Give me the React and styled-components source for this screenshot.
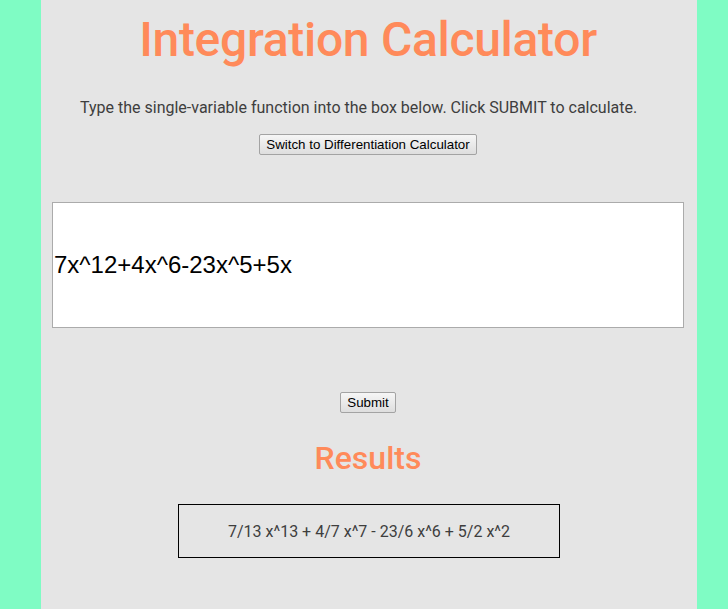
import React from "react";
import styled, { createGlobalStyle } from "styled-components";

const Global = createGlobalStyle`
  html, body { margin: 0; padding: 0; }
  body { background: #7ffcc4; font-family: Roboto, "Liberation Sans", sans-serif; }
`;

const Page = styled.div`
  min-height: 609px;
  display: flex;
`;

const Panel = styled.main`
  flex: 1;
  margin: 0 31px 0 41px;
  background: #e5e5e5;
  min-height: 609px;
  display: flex;
  flex-direction: column;
  align-items: center;
  padding: 0 13px 0 11px;
`;

const Title = styled.h1`
  margin: 12px 0 0;
  font-family: Roboto, sans-serif;
  font-size: 48px;
  font-weight: 500;
  line-height: 56px;
  letter-spacing: -0.3px;
  color: #ff8a5a;
  text-align: center;
`;

const Intro = styled.p`
  align-self: flex-start;
  margin: 30px 0 0 28px;
  font-size: 16px;
  line-height: 19px;
  color: #3e3e3e;
`;

const Btn = styled.button`
  font-family: Arial, "Liberation Sans", sans-serif;
  font-size: 13.33px;
  color: #000;
  padding: 2px 6px;
  line-height: 15px;
  background: linear-gradient(#f6f6f6, #dedede);
  border: 1px solid #a3a3a3;
  border-radius: 2px;
  margin-top: ${(p) => p.$top}px;
`;

const FuncInput = styled.input`
  align-self: stretch;
  box-sizing: border-box;
  margin-top: 47px;
  height: 126px;
  border: 1px solid #ababab;
  background: #fff;
  padding: 0 1px;
  font-family: Arial, "Liberation Sans", sans-serif;
  font-size: 24px;
  color: #000;
  outline: none;
`;

const ResultsTitle = styled.h2`
  margin: 26px 0 0;
  font-size: 32px;
  font-weight: 500;
  line-height: 38px;
  color: #ff8a5a;
`;

const ResultBox = styled.div`
  margin: 27px 0 0 2px;
  width: 380px;
  height: 52px;
  border: 1px solid #000;
  display: flex;
  align-items: center;
  justify-content: center;
  font-size: 16px;
  color: #3e3e3e;
`;

export default function App() {
  return (
    <>
      <Global />
      <Page>
        <Panel>
          <Title>Integration Calculator</Title>
          <Intro>
            Type the single-variable function into the box below. Click SUBMIT to calculate.
          </Intro>
          <Btn $top={17}>Switch to Differentiation Calculator</Btn>
          <FuncInput defaultValue="7x^12+4x^6-23x^5+5x" />
          <Btn $top={64}>Submit</Btn>
          <ResultsTitle>Results</ResultsTitle>
          <ResultBox>7/13 x^13 + 4/7 x^7 - 23/6 x^6 + 5/2 x^2</ResultBox>
        </Panel>
      </Page>
    </>
  );
}
